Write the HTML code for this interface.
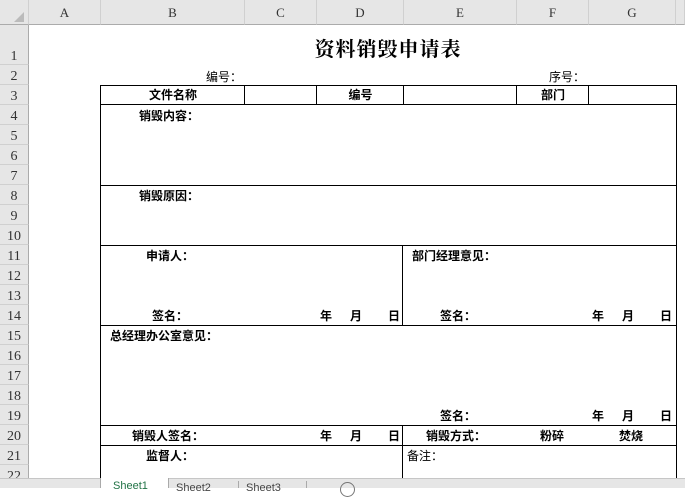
<!DOCTYPE html>
<html><head><meta charset="utf-8"><style>
*{margin:0;padding:0;box-sizing:border-box}
body{width:685px;height:488px;overflow:hidden;background:#fff;position:relative;font-family:"Liberation Sans","Noto Sans CJK SC",sans-serif;font-size:12px;color:#000}
.a{position:absolute}
.ch{top:0;height:25px;background:#e6e6e6;border-bottom:1px solid #ababab;border-right:1px solid #d0d0d0;text-align:center;line-height:25px;font-family:"Liberation Serif",serif;font-size:13px;color:#333}
.rh{left:0;width:29px;background:#e6e6e6;border-right:1px solid #ababab;border-bottom:1px solid #d0d0d0;text-align:center;font-family:"Liberation Serif",serif;font-size:14px;color:#333;padding-top:4px}
.h{height:1px;background:#000}
.v{width:1px;background:#000}
.t{font-weight:bold;height:20px;line-height:22px;white-space:nowrap}
</style></head><body>
<div class="a ch" style="left:0;width:29px"></div>
<div class="a" style="left:14px;top:12px;width:0;height:0;border-left:10px solid transparent;border-bottom:10px solid #bbb"></div>
<div class="a ch" style="left:29px;width:72px">A</div>
<div class="a ch" style="left:101px;width:144px">B</div>
<div class="a ch" style="left:245px;width:72px">C</div>
<div class="a ch" style="left:317px;width:87px">D</div>
<div class="a ch" style="left:404px;width:113px">E</div>
<div class="a ch" style="left:517px;width:72px">F</div>
<div class="a ch" style="left:589px;width:87px">G</div>
<div class="a ch" style="left:676px;width:9px"></div>
<div class="a rh" style="top:25px;height:40px;padding-top:24px">1</div>
<div class="a rh" style="top:65px;height:20px">2</div>
<div class="a rh" style="top:85px;height:20px">3</div>
<div class="a rh" style="top:105px;height:20px">4</div>
<div class="a rh" style="top:125px;height:20px">5</div>
<div class="a rh" style="top:145px;height:20px">6</div>
<div class="a rh" style="top:165px;height:20px">7</div>
<div class="a rh" style="top:185px;height:20px">8</div>
<div class="a rh" style="top:205px;height:20px">9</div>
<div class="a rh" style="top:225px;height:20px">10</div>
<div class="a rh" style="top:245px;height:20px">11</div>
<div class="a rh" style="top:265px;height:20px">12</div>
<div class="a rh" style="top:285px;height:20px">13</div>
<div class="a rh" style="top:305px;height:20px">14</div>
<div class="a rh" style="top:325px;height:20px">15</div>
<div class="a rh" style="top:345px;height:20px">16</div>
<div class="a rh" style="top:365px;height:20px">17</div>
<div class="a rh" style="top:385px;height:20px">18</div>
<div class="a rh" style="top:405px;height:20px">19</div>
<div class="a rh" style="top:425px;height:20px">20</div>
<div class="a rh" style="top:445px;height:20px">21</div>
<div class="a rh" style="top:465px;height:20px">22</div>

<div class="a" style="left:250px;width:276px;top:33px;text-align:center;font-family:'Liberation Serif','Noto Serif CJK SC',serif;font-size:20px;font-weight:bold;letter-spacing:1px">资料销毁申请表</div>
<div class="a" style="left:206px;top:68px;line-height:18px">编号：</div>
<div class="a" style="left:549px;top:68px;line-height:18px">序号：</div>

<div class="a h" style="left:100px;top:85px;width:577px"></div>
<div class="a h" style="left:100px;top:104px;width:577px"></div>
<div class="a h" style="left:100px;top:185px;width:577px"></div>
<div class="a h" style="left:100px;top:245px;width:577px"></div>
<div class="a h" style="left:100px;top:325px;width:577px"></div>
<div class="a h" style="left:100px;top:425px;width:577px"></div>
<div class="a h" style="left:100px;top:445px;width:577px"></div>
<div class="a v" style="left:100px;top:85px;height:393px"></div>
<div class="a v" style="left:676px;top:85px;height:393px"></div>
<div class="a v" style="left:244px;top:85px;height:20px"></div>
<div class="a v" style="left:316px;top:85px;height:20px"></div>
<div class="a v" style="left:403px;top:85px;height:20px"></div>
<div class="a v" style="left:516px;top:85px;height:20px"></div>
<div class="a v" style="left:588px;top:85px;height:20px"></div>
<div class="a v" style="left:402px;top:245px;height:80px"></div>
<div class="a v" style="left:402px;top:425px;height:53px"></div>

<div class="a t" style="left:101px;width:144px;top:84px;text-align:center">文件名称</div>
<div class="a t" style="left:317px;width:87px;top:84px;text-align:center">编号</div>
<div class="a t" style="left:517px;width:72px;top:84px;text-align:center">部门</div>
<div class="a t" style="left:139px;top:105px">销毁内容：</div>
<div class="a t" style="left:139px;top:185px">销毁原因：</div>
<div class="a t" style="left:146px;top:245px">申请人：</div>
<div class="a t" style="left:412px;top:245px">部门经理意见：</div>
<div class="a t" style="left:152px;top:305px">签名：</div>
<div class="a t" style="left:320px;top:305px">年</div>
<div class="a t" style="left:350px;top:305px">月</div>
<div class="a t" style="left:388px;top:305px">日</div>
<div class="a t" style="left:440px;top:305px">签名：</div>
<div class="a t" style="left:592px;top:305px">年</div>
<div class="a t" style="left:622px;top:305px">月</div>
<div class="a t" style="left:660px;top:305px">日</div>
<div class="a t" style="left:110px;top:325px">总经理办公室意见：</div>
<div class="a t" style="left:440px;top:405px">签名：</div>
<div class="a t" style="left:592px;top:405px">年</div>
<div class="a t" style="left:622px;top:405px">月</div>
<div class="a t" style="left:660px;top:405px">日</div>
<div class="a t" style="left:132px;top:425px">销毁人签名：</div>
<div class="a t" style="left:320px;top:425px">年</div>
<div class="a t" style="left:350px;top:425px">月</div>
<div class="a t" style="left:388px;top:425px">日</div>
<div class="a t" style="left:426px;top:425px">销毁方式：</div>
<div class="a t" style="left:540px;top:425px">粉碎</div>
<div class="a t" style="left:619px;top:425px">焚烧</div>
<div class="a t" style="left:146px;top:445px">监督人：</div>
<div class="a t" style="left:407px;top:445px;font-weight:normal">备注：</div>

<div class="a" style="left:0;top:478px;width:685px;height:10px;background:#e6e6e6;border-top:1px solid #c6c6c6"></div>
<div class="a" style="left:100px;top:478px;width:69px;height:10px;background:#fff;border-left:1px solid #aaa;border-right:1px solid #aaa;color:#217346;font-size:11px;padding-left:12px;line-height:16px">Sheet1</div>
<div class="a" style="left:176px;top:480px;font-size:11px;color:#444;line-height:16px">Sheet2</div>
<div class="a v" style="left:238px;top:481px;height:7px;background:#aaa"></div>
<div class="a" style="left:246px;top:480px;font-size:11px;color:#444;line-height:16px">Sheet3</div>
<div class="a v" style="left:306px;top:481px;height:7px;background:#aaa"></div>
<div class="a" style="left:340px;top:482px;width:15px;height:15px;border:1px solid #777;border-radius:50%"></div>
</body></html>
